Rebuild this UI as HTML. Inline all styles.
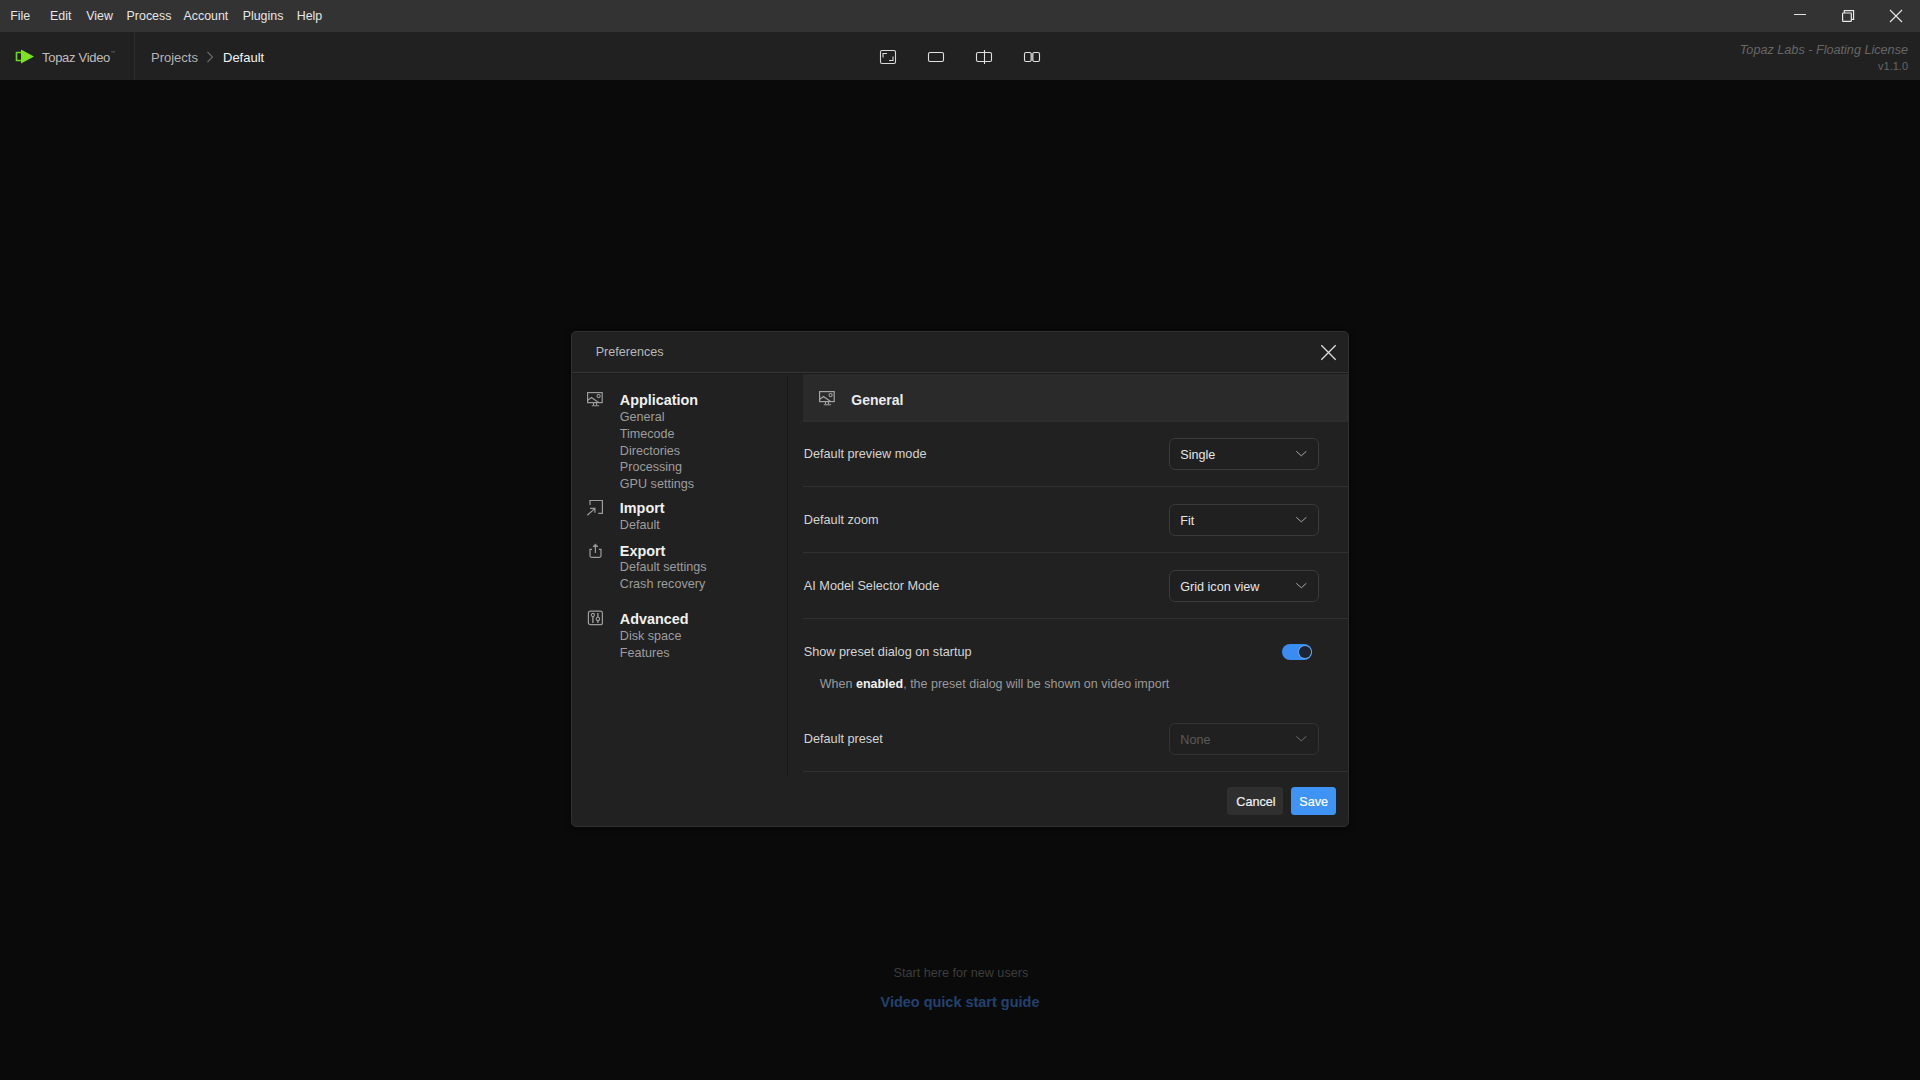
<!DOCTYPE html>
<html><head><meta charset="utf-8">
<style>
*{margin:0;padding:0;box-sizing:border-box}
html,body{width:1920px;height:1080px;overflow:hidden;background:#0a0a0a;font-family:"Liberation Sans",sans-serif;position:relative}
.a{position:absolute;white-space:nowrap;line-height:1}
#menubar{position:absolute;left:0;top:0;width:1920px;height:32px;background:#333333}
#menubar .m{position:absolute;top:10.2px;font-size:12.4px;color:#e6e6e6;line-height:13px}
#hdr{position:absolute;left:0;top:32px;width:1920px;height:48px;background:#212121}
#hdr .div{position:absolute;left:134px;top:0;width:1px;height:48px;background:#2c2c2c}
#dlg{position:absolute;left:571.3px;top:331px;width:777.7px;height:496px;background:#212121;border:1px solid #303030;border-radius:5px;box-shadow:0 1px 5px 1px rgba(0,0,0,0.45)}
.sep{position:absolute;height:1px;background:#303030}
.lbl{position:absolute;font-size:12.7px;color:#d4d4d4;line-height:1}
.dd{position:absolute;left:596.8px;width:149.8px;height:31.8px;border:1.2px solid #3a3a3a;border-radius:6px;background:#202020}
.dd span{position:absolute;left:10.2px;top:9.8px;font-size:12.6px;color:#e6e6e6;line-height:1}
.dd svg{position:absolute;left:125.1px;top:11px}
.nav{position:absolute;left:47.5px;font-size:14.4px;font-weight:bold;color:#f0f0f0;line-height:1}
.sub{position:absolute;left:47.5px;font-size:12.6px;color:#9d9d9d;line-height:1}
</style></head><body>
<div id="menubar">
  <div class="m" style="left:10.3px">File</div>
  <div class="m" style="left:50px">Edit</div>
  <div class="m" style="left:86.3px">View</div>
  <div class="m" style="left:126.6px">Process</div>
  <div class="m" style="left:183.5px">Account</div>
  <div class="m" style="left:242.7px">Plugins</div>
  <div class="m" style="left:296.7px">Help</div>
  <!-- window controls -->
  <div class="a" style="left:1794px;top:14px;width:12px;height:1px;background:#e0e0e0"></div>
  <svg class="a" style="left:1841px;top:9px" width="14" height="14" viewBox="0 0 14 14"><rect x="1.6" y="4" width="8.7" height="8.4" rx="0.6" fill="none" stroke="#e8e8e8" stroke-width="1.2"/><path d="M3.3 4V1.6H12.6V10.4H10.3" fill="none" stroke="#e8e8e8" stroke-width="1.2"/></svg>
  <svg class="a" style="left:1889px;top:9px" width="14" height="14" viewBox="0 0 14 14"><path d="M1 1L13 13M13 1L1 13" stroke="#e8e8e8" stroke-width="1.1"/></svg>
</div>
<div id="hdr">
  <svg class="a" style="left:15px;top:17px" width="20" height="15" viewBox="0 0 20 15"><path d="M6 3.5H1.5v8H6" fill="none" stroke="#6ad81c" stroke-width="1.6"/><path d="M6 0.5L19 7.5L6 14.5Z" fill="#7be31f"/></svg>
  <div class="a" style="left:42px;top:19px;font-size:13px;color:#bdbdbd;letter-spacing:-0.3px">Topaz Video</div>
  <div class="a" style="left:110.5px;top:18.5px;font-size:4.5px;color:#777">™</div>
  <div class="div"></div>
  <div class="a" style="left:151px;top:19px;font-size:13px;color:#b4b4b4">Projects</div>
  <svg class="a" style="left:206px;top:19px" width="8" height="12" viewBox="0 0 8 12"><path d="M1.5 1L6.5 6L1.5 11" fill="none" stroke="#6a6a6a" stroke-width="1.1"/></svg>
  <div class="a" style="left:223px;top:19px;font-size:13px;color:#f2f2f2">Default</div>
  <!-- view icons -->
  <svg class="a" style="left:879px;top:17px" width="18" height="16" viewBox="0 0 18 16"><rect x="1.5" y="1.5" width="15" height="13" rx="1.5" fill="none" stroke="#d8d8d8" stroke-width="1.1"/><path d="M4 8.5V4.5H8M14 7.5V11.5H10" fill="none" stroke="#d8d8d8" stroke-width="1.1"/></svg>
  <svg class="a" style="left:927px;top:19px" width="18" height="12" viewBox="0 0 18 12"><rect x="1.5" y="1.5" width="15" height="9" rx="1.5" fill="none" stroke="#e0e0e0" stroke-width="1.1"/></svg>
  <svg class="a" style="left:975px;top:17px" width="18" height="16" viewBox="0 0 18 16"><rect x="1.5" y="3.5" width="15" height="9" rx="1.5" fill="none" stroke="#e0e0e0" stroke-width="1.1"/><path d="M9.5 1V15" stroke="#e0e0e0" stroke-width="1.1"/></svg>
  <svg class="a" style="left:1023px;top:19px" width="18" height="12" viewBox="0 0 18 12"><rect x="8.2" y="2" width="1.6" height="8" fill="#8a8a8a"/><rect x="1.5" y="1.5" width="6.6" height="9" rx="1.5" fill="none" stroke="#e0e0e0" stroke-width="1.1"/><rect x="9.9" y="1.5" width="6.6" height="9" rx="1.5" fill="none" stroke="#e0e0e0" stroke-width="1.1"/></svg>
  <div class="a" style="right:12px;top:11.7px;font-size:12.65px;color:#666;font-style:italic">Topaz Labs - Floating License</div>
  <div class="a" style="right:12px;top:28.8px;font-size:11px;color:#666">v1.1.0</div>
</div>

<div id="dlg">
  <div class="a" style="left:23.4px;top:14.2px;font-size:12.6px;color:#b8b8b8">Preferences</div>
  <svg class="a" style="left:748px;top:12px" width="18" height="18" viewBox="0 0 18 18"><path d="M1.3 1.3L15.7 15.7M15.7 1.3L1.3 15.7" stroke="#dcdcdc" stroke-width="1.3"/></svg>
  <div class="sep" style="left:0;top:40px;width:776px;background:#353535"></div>
  <!-- left nav -->
  <div class="a" style="left:0;top:41px;width:776px;height:1px;background:#1b1b1b"></div>
  <div class="a" style="left:215px;top:44px;width:1px;height:400px;background:#171717"></div>
  <!-- nav icons -->
  <svg class="a" style="left:14px;top:59px" width="20" height="18" viewBox="0 0 20 18"><rect x="1.6" y="1.6" width="14.6" height="10" fill="none" stroke="#9c9c9c" stroke-width="1.2"/><path d="M1.8 9.2L5.5 6.4L11.5 10.8L12.6 11.6" fill="none" stroke="#9c9c9c" stroke-width="1.2"/><circle cx="12.6" cy="5.1" r="1.6" fill="none" stroke="#9c9c9c" stroke-width="1.1"/><path d="M7.5 12v2M10.5 12v2M5.8 14.7H13.1" fill="none" stroke="#9c9c9c" stroke-width="1.1"/></svg>
  <div class="nav" style="top:60.8px">Application</div>
  <div class="sub" style="top:78.5px">General</div>
  <div class="sub" style="top:95.5px">Timecode</div>
  <div class="sub" style="top:112.5px">Directories</div>
  <div class="sub" style="top:129.4px">Processing</div>
  <div class="sub" style="top:146.3px">GPU settings</div>
  <svg class="a" style="left:14px;top:166px" width="20" height="20" viewBox="0 0 20 20"><path d="M4 6.9V2.5H16.4V15.3H12.2" fill="none" stroke="#9c9c9c" stroke-width="1.2"/><path d="M1.3 17.3L8.2 11.1M4 10.4H8.9V14.7" fill="none" stroke="#9c9c9c" stroke-width="1.2"/></svg>
  <div class="nav" style="top:169.4px">Import</div>
  <div class="sub" style="top:187.3px">Default</div>
  <svg class="a" style="left:14px;top:208px" width="20" height="20" viewBox="0 0 20 20"><path d="M6 9.3H4V15.8Q4 17.3 5.5 17.3H13.5Q15 17.3 15 15.8V9.3H12.9" fill="none" stroke="#9c9c9c" stroke-width="1.2"/><path d="M9.4 4.6V12.9" stroke="#9c9c9c" stroke-width="1.2"/><path d="M6.9 6.6L9.4 4.2L12 6.6Z" fill="#9c9c9c" stroke="#9c9c9c" stroke-width="0.8"/></svg>
  <div class="nav" style="top:211.5px">Export</div>
  <div class="sub" style="top:229.2px">Default settings</div>
  <div class="sub" style="top:246.3px">Crash recovery</div>
  <svg class="a" style="left:14px;top:276px" width="20" height="20" viewBox="0 0 20 20"><rect x="2.4" y="3.2" width="14" height="13.5" rx="2" fill="none" stroke="#9c9c9c" stroke-width="1.2"/><path d="M6.9 5.1V14.9M11.9 5.1V14.9" stroke="#9c9c9c" stroke-width="1.4"/><circle cx="6.9" cy="7" r="1.6" fill="#1e1e1e" stroke="#9c9c9c" stroke-width="1.1"/><circle cx="11.9" cy="10.9" r="1.7" fill="#1e1e1e" stroke="#9c9c9c" stroke-width="1.1"/></svg>
  <div class="nav" style="top:280.1px">Advanced</div>
  <div class="sub" style="top:297.6px">Disk space</div>
  <div class="sub" style="top:314.5px">Features</div>

  <!-- right panel -->
  <div class="a" style="left:230.7px;top:42.2px;width:545.3px;height:47.8px;background:#2a2a2a;box-shadow:inset -2px -2px 0 #2d2d2d"></div>
  <svg class="a" style="left:246px;top:58px" width="20" height="18" viewBox="0 0 20 18"><rect x="1.6" y="1.6" width="14.6" height="10" fill="none" stroke="#a4a4a4" stroke-width="1.2"/><path d="M1.8 9.2L5.5 6.4L11.5 10.8L12.6 11.6" fill="none" stroke="#a4a4a4" stroke-width="1.2"/><circle cx="12.6" cy="5.1" r="1.6" fill="none" stroke="#a4a4a4" stroke-width="1.1"/><path d="M7.5 12v2M10.5 12v2M5.8 14.7H13.1" fill="none" stroke="#a4a4a4" stroke-width="1.1"/></svg>
  <div class="a" style="left:279px;top:61px;font-size:14px;font-weight:bold;color:#ececec">General</div>

  <div class="lbl" style="left:231.5px;top:116.4px">Default preview mode</div>
  <div class="dd" style="top:106px"><span>Single</span><svg width="12" height="8" viewBox="0 0 12 8"><path d="M1.3 1.3L6.3 5.8L11.3 1.3" fill="none" stroke="#a8a8a8" stroke-width="1"/></svg></div>
  <div class="sep" style="left:231px;top:154px;width:545px"></div>

  <div class="lbl" style="left:231.5px;top:182.4px">Default zoom</div>
  <div class="dd" style="top:172px"><span>Fit</span><svg width="12" height="8" viewBox="0 0 12 8"><path d="M1.3 1.3L6.3 5.8L11.3 1.3" fill="none" stroke="#a8a8a8" stroke-width="1"/></svg></div>
  <div class="sep" style="left:231px;top:220px;width:545px"></div>

  <div class="lbl" style="left:231.5px;top:248.4px">AI Model Selector Mode</div>
  <div class="dd" style="top:238px"><span>Grid icon view</span><svg width="12" height="8" viewBox="0 0 12 8"><path d="M1.3 1.3L6.3 5.8L11.3 1.3" fill="none" stroke="#a8a8a8" stroke-width="1"/></svg></div>
  <div class="sep" style="left:231px;top:286px;width:545px"></div>

  <div class="lbl" style="left:231.5px;top:314.4px">Show preset dialog on startup</div>
  <div class="a" style="left:710.2px;top:311.9px;width:30px;height:16.4px;border-radius:8.2px;background:#3a8cf0"></div>
  <div class="a" style="left:727.1px;top:314.3px;width:11.4px;height:11.4px;border-radius:50%;background:#1b2533;box-shadow:0 0 0 0.8px #6aaaf2"></div>
  <div class="a" style="left:247.5px;top:346.4px;font-size:12.5px;color:#9a9a9a">When <b style="color:#f0f0f0">enabled</b>, the preset dialog will be shown on video import</div>

  <div class="lbl" style="left:231.5px;top:401.4px">Default preset</div>
  <div class="dd" style="top:391px;border-color:#333333"><span style="color:#5a5a5a">None</span><svg width="12" height="8" viewBox="0 0 12 8"><path d="M1.3 1.3L6.3 5.8L11.3 1.3" fill="none" stroke="#5a5a5a" stroke-width="1.1"/></svg></div>
  <div class="sep" style="left:231px;top:439px;width:545px"></div>

  <div class="a" style="left:655px;top:455px;width:56px;height:28px;border-radius:3.5px;background:#2f2f2f"></div>
  <div class="a" style="left:664px;top:464px;font-size:12.6px;color:#f0f0f0;-webkit-text-stroke:0.2px #f0f0f0">Cancel</div>
  <div class="a" style="left:719px;top:455px;width:45px;height:28px;border-radius:3.5px;background:#3f93f5"></div>
  <div class="a" style="left:727px;top:464px;font-size:12.6px;color:#ffffff;-webkit-text-stroke:0.2px #fff">Save</div>
</div>
<div class="a" style="left:893.5px;top:967px;font-size:12.64px;color:#3d3d3d">Start here for new users</div>
<div class="a" style="left:880.5px;top:994.6px;font-size:14.47px;font-weight:bold;color:#22426f">Video quick start guide</div>
</body></html>
